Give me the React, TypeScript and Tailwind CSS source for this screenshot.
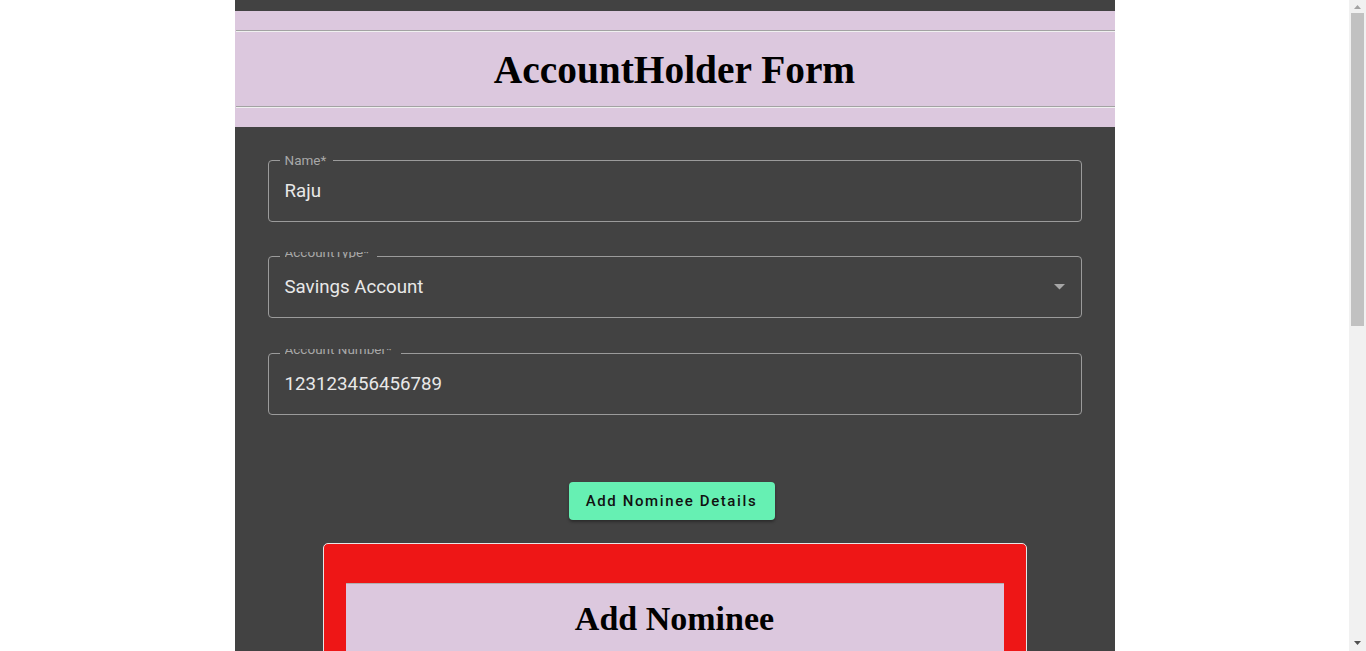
import React from "react";

function Field({
  label,
  value,
  clipped,
  select,
  notch,
}: {
  label: string;
  value: string;
  clipped?: boolean;
  select?: boolean;
  notch: number;
}) {
  return (
    <div className="relative h-[62px] w-full">
      <div className="absolute inset-0 rounded-[4px] border border-[#9b9b9b]" />
      <div
        className="absolute top-[-1px] left-[12px] h-[2px] bg-[#424242]"
        style={{ width: notch }}
      />
      {clipped ? (
        <div className="absolute left-[17px] top-[-4px] h-[6px] overflow-hidden">
          <div className="mt-[-7px] text-[13.5px] leading-[14px] text-[#a8a8a8] whitespace-nowrap font-['Roboto',sans-serif]">
            {label}
          </div>
        </div>
      ) : (
        <div className="absolute left-[17px] top-[-7px] text-[13.5px] leading-[14px] text-[#a8a8a8] whitespace-nowrap font-['Roboto',sans-serif]">
          {label}
        </div>
      )}
      <div className="absolute inset-0 flex items-center pl-[17px] pr-[17px]">
        <span className="text-[18.7px] leading-[22px] text-[#e8e8e8] font-['Roboto',sans-serif] pb-[1px]">
          {value}
        </span>
      </div>
      {select && (
        <svg
          className="absolute right-[17px] top-[28px]"
          width="11"
          height="6"
          viewBox="0 0 11 6"
        >
          <path d="M0 0 L11 0 L5.5 5.5 Z" fill="#a6a6a6" />
        </svg>
      )}
    </div>
  );
}

function Hr() {
  return (
    <div className="w-full">
      <div className="h-px bg-[#a3a3a3]" />
      <div className="h-px bg-[#f0f0f0]" />
    </div>
  );
}

function Scrollbar() {
  return (
    <div className="fixed right-0 top-0 flex h-screen w-[17px] flex-col items-center bg-[#f1f1f1]">
      <div className="flex h-[13px] w-full items-center justify-center">
        <svg width="7" height="4" viewBox="0 0 7 4">
          <path d="M0 4 L7 4 L3.5 0 Z" fill="#a3a3a3" />
        </svg>
      </div>
      <div className="h-[313px] w-[13px] bg-[#c1c1c1]" />
      <div className="flex-1" />
      <div className="flex h-[17px] w-full items-center justify-center">
        <svg width="7" height="4" viewBox="0 0 7 4">
          <path d="M0 0 L7 0 L3.5 4 Z" fill="#505050" />
        </svg>
      </div>
    </div>
  );
}

export default function App() {
  return (
    <div className="min-h-screen bg-white">
      <div className="mr-[17px]">
        <div className="mx-auto w-[880px] bg-[#424242] pt-[11px] pb-[40px]">
          <div className="bg-[#dcc8de] pt-[19px] pb-[19px]">
            <div className="pl-px">
              <Hr />
            </div>
            <div className="flex h-[74px] items-center justify-center">
              <h1 className="font-['Liberation_Serif',serif] text-[39.4px] leading-[40px] font-bold text-black mt-[2px]">
                AccountHolder Form
              </h1>
            </div>
            <div className="pl-px">
              <Hr />
            </div>
          </div>

          <div className="flex flex-col gap-[34px] px-[33px] pt-[33px]">
            <Field label="Name*" value="Raju" notch={53} />
            <div>
              <Field label="AccountType*" value="Savings Account" clipped select notch={97} />
            </div>
            <div className="mt-[1px]">
              <Field label="Account Number*" value="123123456456789" clipped notch={121} />
            </div>
          </div>

          <div className="flex justify-center pt-[67px] pr-[6px]">
            <button className="h-[38px] w-[206px] rounded-[4px] bg-[#66f0b3] text-[15px] font-medium tracking-[1.6px] text-[#111] shadow-[0_2px_3px_rgba(0,0,0,0.35)] font-['Roboto',sans-serif]">
              Add Nominee Details
            </button>
          </div>

          <div className="mx-auto mt-[23px] w-[704px] rounded-[5px] border border-[#e6e6e6] bg-[#ee1616] px-[22px] pt-[39px] pb-[40px]">
            <div className="bg-[#dcc8de] pb-[40px]">
              <div className="h-px bg-[#b0b0b0]" />
              <div className="flex justify-center pt-[18px]">
                <h2 className="font-['Liberation_Serif',serif] text-[34px] leading-[34px] font-bold text-black">
                  Add Nominee
                </h2>
              </div>
              <div className="flex flex-col gap-[30px] px-[30px] pt-[40px]">
                {["Nominee Name*", "Relation*", "Age*", "Share (%)*", "Address*"].map((l) => (
                  <div
                    key={l}
                    className="relative h-[56px] rounded-[4px] border border-[#777]"
                  >
                    <span className="absolute left-[12px] top-[-8px] bg-[#dcc8de] px-1 text-[12px] text-[#555] font-['Roboto',sans-serif]">
                      {l}
                    </span>
                  </div>
                ))}
                <div className="flex justify-center">
                  <button className="h-[38px] rounded-[4px] bg-[#66f0b3] px-5 text-[15px] font-medium tracking-[1.4px] text-[#111] font-['Roboto',sans-serif]">
                    Submit
                  </button>
                </div>
              </div>
            </div>
          </div>
        </div>
      </div>
      <Scrollbar />
    </div>
  );
}
